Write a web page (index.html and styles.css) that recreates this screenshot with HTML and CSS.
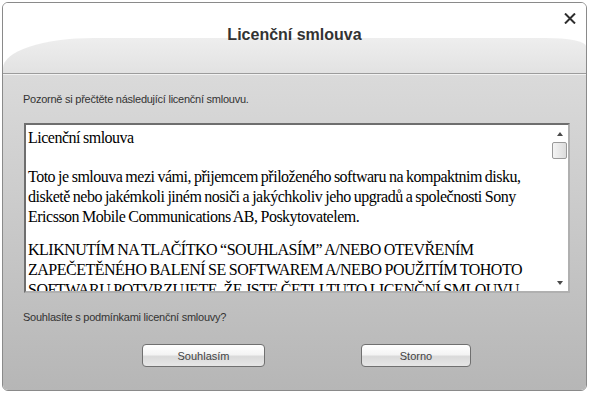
FILE: index.html
```
<!DOCTYPE html>
<html lang="cs">
<head>
<meta charset="utf-8">
<title>Licenční smlouva</title>
<link rel="stylesheet" href="styles.css">
</head>
<body>
<div class="dialog">
  <div class="header">
    <div class="gloss"></div>
    <h1 class="title">Licenční smlouva</h1>
    <div class="close" aria-label="Zavřít">
      <svg width="12" height="11" viewBox="0 0 12 11"><path d="M1 0.5 L11 10.5 M11 0.5 L1 10.5" stroke="#2e2e2e" stroke-width="2" fill="none"/></svg>
    </div>
  </div>
  <div class="body">
    <p class="intro">Pozorně si přečtěte následující licenční smlouvu.</p>
    <div class="textbox">
      <div class="textcontent">
        <p class="p-head">Licenční smlouva</p>
        <p class="p-intro">Toto je smlouva mezi vámi, přijemcem přiloženého softwaru na kompaktnim disku, disketě nebo jakémkoli jiném nosiči a jakýchkoliv jeho upgradů a společnosti Sony Ericsson Mobile Communications AB, Poskytovatelem.</p>
        <p>KLIKNUTÍM NA TLAČÍTKO “SOUHLASÍM” A/NEBO OTEVŘENÍM ZAPEČETĚNÉHO BALENÍ SE SOFTWAREM A/NEBO POUŽITÍM TOHOTO SOFTWARU POTVRZUJETE, ŽE JSTE ČETLI TUTO LICENČNÍ SMLOUVU</p>
      </div>
      <div class="scrollbar">
        <div class="arrow up"></div>
        <div class="thumb"></div>
        <div class="track"></div>
        <div class="arrow down"></div>
      </div>
    </div>
    <p class="question">Souhlasíte s podmínkami licenční smlouvy?</p>
    <div class="buttons">
      <button class="btn btn-agree">Souhlasím</button>
      <button class="btn btn-cancel">Storno</button>
    </div>
  </div>
</div>
</body>
</html>
```
FILE: styles.css
```
html, body {
  margin: 0;
  padding: 0;
  background: #ffffff;
}
body {
  width: 591px;
  height: 393px;
  overflow: hidden;
}
.dialog {
  margin: 2px 0 0 2px;
  width: 583px;
  height: 387px;
  border: 1px solid #8a8a8a;
  border-radius: 6px;
  overflow: hidden;
  display: flex;
  flex-direction: column;
  font-family: "Liberation Sans", Arial, sans-serif;
}
.header {
  height: 70px;
  display: grid;
  grid-template: 1fr / 1fr;
  background: #ffffff;
  border-bottom: 1px solid #9c9c9c;
}
.gloss {
  grid-area: 1 / 1;
  align-self: end;
  height: 35px;
  background: linear-gradient(#eeeeee, #e2e2e2);
  border-top-left-radius: 90px 30px;
  border-top-right-radius: 40px 8px;
}
.title {
  grid-area: 1 / 1;
  margin: 22px 0 0 0;
  justify-self: center;
  align-self: start;
  font-size: 16px;
  font-weight: bold;
  color: #333333;
  line-height: 19px;
}
.close {
  grid-area: 1 / 1;
  justify-self: end;
  align-self: start;
  margin: 10px 10px 0 0;
  width: 12px;
  height: 11px;
}
.close svg { display: block; }
.body {
  flex: 1;
  display: flex;
  flex-direction: column;
  padding: 0 16px 0 20px;
  background: linear-gradient(#dadada, #b6b6b6);
  border-top: 1px solid #f2f2f2;
}
.intro, .question {
  margin: 0;
  font-size: 11px;
  line-height: 13px;
  letter-spacing: -0.25px;
  color: #333333;
}
.intro { margin-top: 18px; }
.textbox {
  margin: 17px 0 0 1px;
  height: 166px;
  border: 2px solid #6e6e6e;
  border-right-color: #b0b0b0;
  border-bottom-color: #b0b0b0;
  background: #ffffff;
  display: flex;
  overflow: hidden;
}
.textcontent {
  flex: 1;
  height: 166px;
  overflow: hidden;
  padding: 3px 0 0 2px;
  box-sizing: border-box;
  font-family: "Liberation Serif", "Times New Roman", serif;
  font-size: 16px;
  letter-spacing: -0.5px;
  word-spacing: -0.5px;
  line-height: 20px;
  color: #000000;
}
.textcontent p { margin: 0; }
.textcontent .p-head { margin-bottom: 19px; }
.textcontent .p-intro { margin-bottom: 13px; }
.scrollbar {
  width: 17px;
  display: flex;
  flex-direction: column;
  background: #ffffff;
}
.arrow {
  height: 17px;
  display: flex;
  align-items: center;
  justify-content: center;
}
.arrow::before {
  content: "";
  width: 0;
  height: 0;
  border-left: 3px solid transparent;
  border-right: 3px solid transparent;
}
.arrow.up::before { border-bottom: 4px solid #4a4a4a; }
.arrow.down::before { border-top: 4px solid #4a4a4a; }
.thumb {
  height: 15px;
  margin: 0 1px;
  border: 1px solid #9a9a9a;
  border-radius: 2px;
  background: linear-gradient(90deg, #f4f4f4, #dcdcdc);
}
.track { flex: 1; }
.question { margin-top: 18px; }
.buttons {
  margin-top: 20px;
  display: flex;
  padding-left: 119px;
  gap: 96px;
}
.btn {
  height: 23px;
  padding: 0;
  border: 1px solid #707070;
  border-radius: 4px;
  background: linear-gradient(#ffffff 0%, #f4f4f4 45%, #dadada 55%, #e6e6e6 100%);
  font-family: "Liberation Sans", Arial, sans-serif;
  font-size: 11px;
  color: #444444;
}
.btn-agree { width: 123px; }
.btn-cancel { width: 110px; }
```
